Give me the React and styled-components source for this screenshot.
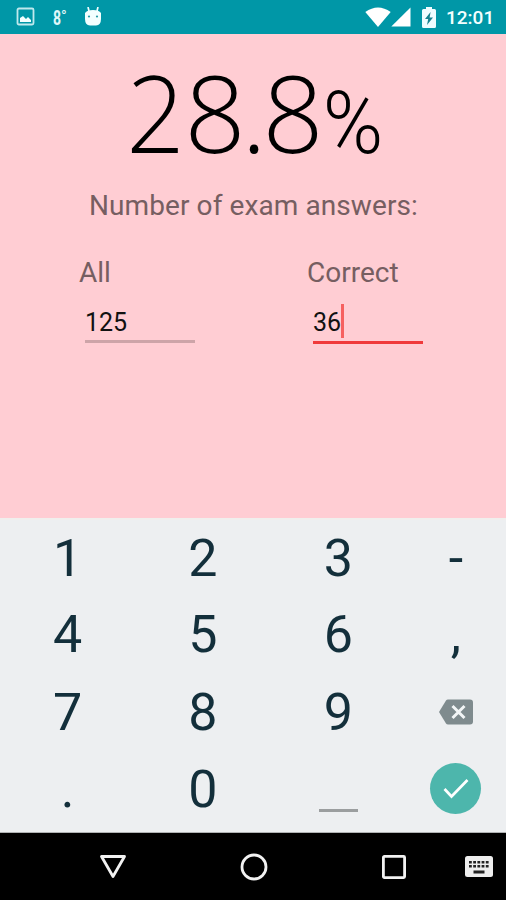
import React from "react";
import styled, { createGlobalStyle } from "styled-components";

const Global = createGlobalStyle`
  * { box-sizing: border-box; }
  body { margin: 0; font-family: Roboto, "Noto Sans", sans-serif; }
`;
const Screen = styled.div`
  width: 506px; height: 900px; overflow: hidden;
  display: flex; flex-direction: column; background: #ffcdd3;
`;
const StatusBar = styled.header`
  height: 34px; flex: none; display: flex; align-items: center;
  background: #0097a7; color: #f4ffff; padding: 0 11px 0 16px;
  svg { display: block; flex: none; }
`;
const Notifications = styled.div`
  display: flex; align-items: center; flex: 1;
`;
const Temperature = styled.span`
  width: 15px; margin: 2px 16px 0 17px; font-size: 20px; line-height: 20px; font-weight: 500;
  display: flex; color: #e0f7f9;
  b { display: block; width: 8px; font-weight: 700; transform: scaleX(.7); transform-origin: left; }
  sup { font-size: 15px; line-height: 17px; }
`;
const SystemIcons = styled.div`
  display: flex; align-items: center;
  svg:nth-of-type(3) { margin-left: 11px; }
`;
const Clock = styled.time`
  font-size: 19px; line-height: 24px; font-weight: 500; margin: 2px 0 0 10px;
  width: 49px; white-space: nowrap;
`;
const Content = styled.main`
  height: 484px; flex: none; display: flex; flex-direction: column;
`;
const Result = styled.h1`
  margin: 19px 0 0 127px; height: 125px; display: flex; align-items: baseline;
  font-family: "Open Sans", sans-serif; font-weight: 300; font-size: 107px; line-height: 118px;
  color: #000;
`;
const Glyph = styled.span`
  display: block; width: ${(p) => p.$w}px;
  span { display: flex; justify-content: center; transform: scaleX(${(p) => p.$sx || 1}); }
`;
const Percent = styled(Glyph)`
  font-family: Roboto, sans-serif; font-weight: 300; font-size: 88px;
`;
const Prompt = styled.p`
  margin: 10px 0 0; padding-left: 89px; font-size: 28px; line-height: 36px;
  color: #765e61; white-space: nowrap; letter-spacing: .09px;
`;
const Fields = styled.div`
  display: grid; grid-template-columns: 228px 200px; padding: 31px 0 0 79px;
`;
const Field = styled.label`
  display: flex; flex-direction: column; color: #765e61; font-size: 28px; line-height: 36px;
`;
const Value = styled.span`
  margin: 12px 0 0 6px; width: 110px; height: ${(p) => (p.$active ? 41 : 40)}px;
  border-bottom: ${(p) => (p.$active ? "3px solid #f03a3b" : "3px solid #cda4a8")};
  display: flex; color: #111; font-size: 25px; line-height: 40px;
`;
const Caret = styled.i`
  width: 3px; height: 34px; background: #f6605f; margin-top: 1px;
`;
const Keypad = styled.section`
  flex: none; height: 315px; border-top: 2px solid #f0efed; border-bottom: 1px solid #b0b2b3;
  background: #edeff1; display: grid;
  grid-template-columns: 135.3px 135.3px 135.3px 100px;
  grid-template-rows: 76px 77.4px 77.4px 77.4px;
`;
const Key = styled.button`
  border: 0; background: none; padding: 0 0 ${(p) => (p.$drawn ? 1 : 0)}px;
  font: 400 52px/75px Roboto, sans-serif;
  color: #132f3b; display: flex; align-items: center; justify-content: center;
`;
const SpaceMark = styled.span`
  width: 39px; height: 3px; background: #9b9e9f; margin-top: 44px;
`;
const Done = styled.span`
  width: 51px; height: 51px; border-radius: 50%; background: #4db6ac;
  display: grid; place-items: center;
`;
const NavBar = styled.nav`
  flex: 1; background: #000; display: grid; align-items: center; justify-items: center;
  grid-template-columns: 42px 141px 141px 140px 42px;
  svg { display: block; }
`;
const NavSlot = styled.span`
  display: block; grid-column: ${(p) => p.$col};
  transform: translateX(${(p) => p.$shift || 0}px);
`;

const PictureIcon = () => (
  <svg width="20" height="20" viewBox="0 0 20 20">
    <rect x="1.5" y="1.5" width="16" height="16" rx="1.4" fill="none" stroke="#bfe9ed" strokeWidth="1.8" />
    <path d="M4 15v-4l3-2 3 3 2-2 3 3v2z" fill="#f3ffff" />
  </svg>
);
const RobotIcon = () => (
  <svg width="18" height="20" viewBox="0 0 18 20">
    <path d="M4 0l1 4M14 0l-1 4" stroke="#f3ffff" strokeWidth="1.7" />
    <path d="M1 6Q3 3 9 3t8 3v6q0 6-5 6.500H6q-5-.5-5-6.500z" fill="#f3ffff" />
    <circle cx="5" cy="9.500" r="1.1" fill="#269aa6" /><circle cx="13" cy="9.500" r="1.1" fill="#269aa6" />
  </svg>
);
const WifiIcon = () => (
  <svg width="26" height="20" viewBox="0 0 26 20"><path d="M.3 5Q13-4 25.7 5L13 20z" fill="#fff" /></svg>
);
const SignalIcon = () => (
  <svg width="20" height="20" viewBox="0 0 20 20"><path d="M19.5.5v19H.3z" fill="#fff" /></svg>
);
const BatteryIcon = () => (
  <svg width="14" height="21" viewBox="0 0 14 21">
    <path d="M4 0h6v2h2.5Q14 2 14 3.5v16q0 1.5-1.5 1.5h-11Q0 21 0 19.500v-16Q0 2 1.500 2H4z" fill="#effcff" />
    <path d="M8.600 5L3 12h3.200L5 18l6-7.500H7.600z" fill="#16818f" />
  </svg>
);
const Backspace = () => (
  <svg width="34" height="26" viewBox="0 0 34 26">
    <path d="M9 .5h22q3 0 3 3v19q0 3-3 3H9q-1.300 0-2-1L0 13 7 1.500q.7-1 2-1z" fill="#7f8b8e" />
    <path d="M13.500 7l12 12m0-12l-12 12" stroke="#f2f5f6" strokeWidth="3" />
  </svg>
);
const Check = () => (
  <svg width="26" height="22" viewBox="0 0 26 22"><path d="M1.500 11l7 7.500L24.500 2" fill="none" stroke="#fff" strokeWidth="2.700" /></svg>
);
const Back = () => (
  <svg width="28" height="26" viewBox="0 0 28 26"><path d="M2.500 2.500h23L14 22.500z" fill="none" stroke="#f2f2f2" strokeWidth="2.800" strokeLinejoin="round" /></svg>
);
const Home = () => (
  <svg width="28" height="28" viewBox="0 0 28 28"><circle cx="14" cy="14" r="12" fill="none" stroke="#f2f2f2" strokeWidth="2.800" /></svg>
);
const Recent = () => (
  <svg width="26" height="26" viewBox="0 0 26 26"><rect x="2.400" y="2.400" width="21.200" height="21.200" rx="1" fill="none" stroke="#f2f2f2" strokeWidth="2.800" /></svg>
);
const KeyboardIcon = () => (
  <svg width="28" height="21" viewBox="0 0 28 21">
    <rect width="28" height="21" rx="2.500" fill="#eee" />
    {[5, 9].map((y) => [4, 8.200, 12.400, 16.600, 20.800].map((x) => (
      <rect key={x + "-" + y} x={x} y={y} width="2.800" height="2.500" fill="#222" />
    )))}
    <rect x="8.500" y="14.500" width="11" height="3" fill="#222" />
  </svg>
);

const keys = ["1", "2", "3", "-", "4", "5", "6", ",", "7", "8", "9", <Backspace />, ".", "0", <SpaceMark />, <Done><Check /></Done>];

export default function App() {
  return (
    <Screen>
      <Global />
      <StatusBar>
        <Notifications>
          <PictureIcon />
          <Temperature><b>8</b><sup>°</sup></Temperature>
          <RobotIcon />
        </Notifications>
        <SystemIcons>
          <WifiIcon />
          <SignalIcon />
          <BatteryIcon />
          <Clock>12:01</Clock>
        </SystemIcons>
      </StatusBar>
      <Content>
        <Result>
          <Glyph $w={57} $sx={0.96}><span>2</span></Glyph>
          <Glyph $w={62}><span>8</span></Glyph>
          <Glyph $w={16}><span>.</span></Glyph>
          <Glyph $w={62}><span>8</span></Glyph>
          <Percent $w={58} $sx={0.93}><span>%</span></Percent>
        </Result>
        <Prompt>Number of exam answers:</Prompt>
        <Fields>
          <Field>All<Value>125</Value></Field>
          <Field>Correct<Value $active>36<Caret /></Value></Field>
        </Fields>
      </Content>
      <Keypad>{keys.map((k, i) => <Key key={i} $drawn={typeof k !== "string"}>{k}</Key>)}</Keypad>
      <NavBar>
        <NavSlot $col={2}><Back /></NavSlot>
        <NavSlot $col={3}><Home /></NavSlot>
        <NavSlot $col={4}><Recent /></NavSlot>
        <NavSlot $col={5} $shift={-6}><KeyboardIcon /></NavSlot>
      </NavBar>
    </Screen>
  );
}
